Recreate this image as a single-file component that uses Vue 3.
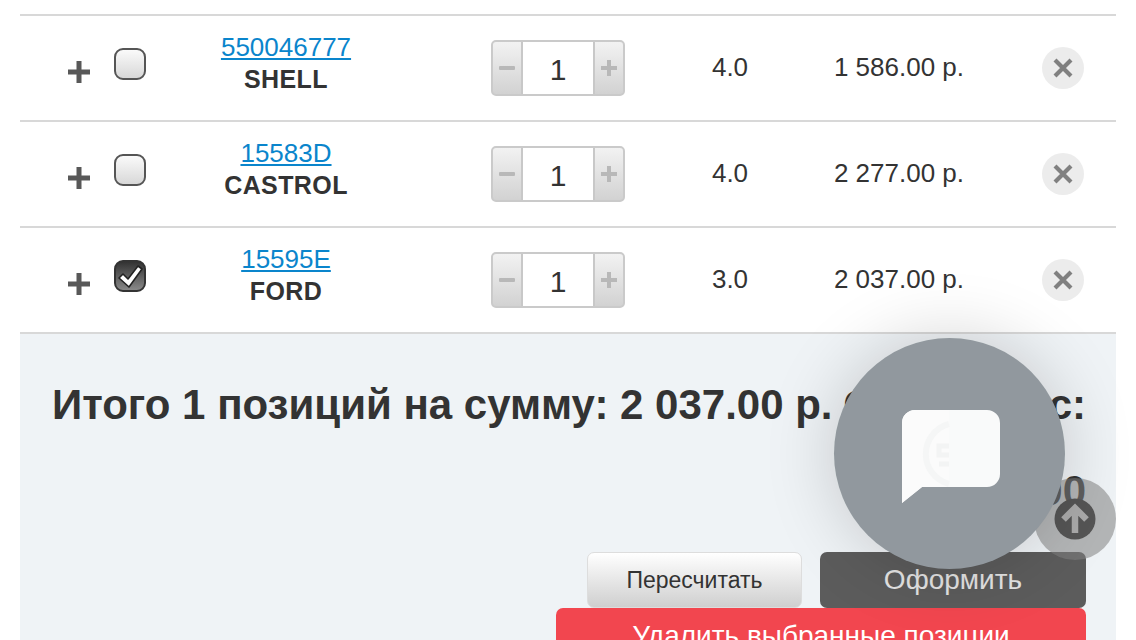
<template>
  <div class="page">
    <div class="rows">
      <div v-for="item in items" :key="item.code" class="row">
        <div class="pick">
          <svg class="plus" width="22" height="22" viewBox="0 0 22 22">
            <path d="M8.500 0h5v8.500H22v5h-8.500V22h-5v-8.500H0v-5h8.500z" fill="#585858" />
          </svg>
          <span :class="['check', { checked: item.checked }]">
            <svg v-if="item.checked" width="32" height="32" viewBox="0 0 32 32">
              <path d="M5 18l4-4 5 5L24 6l4 3-13 18z" fill="#fff" stroke="#222" stroke-width="1.6" stroke-linejoin="round" />
            </svg>
          </span>
        </div>
        <div class="name">
          <a href="#">{{ item.code }}</a>
          <b>{{ item.brand }}</b>
        </div>
        <div class="qty-cell">
          <div class="stepper">
            <span class="step">
              <svg width="16" height="16" viewBox="0 0 16 16"><rect y="6" width="16" height="4" rx="1" fill="#b8b8b8" /></svg>
            </span>
            <span class="value">1</span>
            <span class="step">
              <svg width="16" height="16" viewBox="0 0 16 16"><path d="M6 0h4v6h6v4h-6v6H6v-6H0V6h6z" fill="#b8b8b8" /></svg>
            </span>
          </div>
        </div>
        <div class="num vol">{{ item.volume }}</div>
        <div class="num price">{{ item.price }}</div>
        <div class="remove-cell">
          <span class="remove">
            <svg width="20" height="20" viewBox="0 0 20 20">
              <path d="M2 2l16 16M18 2L2 18" stroke="#808080" stroke-width="4.200" />
            </svg>
          </span>
        </div>
      </div>
    </div>

    <div class="summary">
      <div class="total">
        <span>Итого 1 позиций на сумму: 2 037.00 р.</span>
        <span>Общий вес:</span>
      </div>
      <div class="bonus">0.00</div>
      <div class="actions">
        <button class="btn light">Пересчитать</button>
        <button class="btn dark">Оформить</button>
        <button class="btn red">Удалить выбранные позиции</button>
      </div>
    </div>

    <div class="to-top">
      <svg width="42" height="42" viewBox="0 0 42 42">
        <circle cx="21" cy="21" r="20.500" fill="#555" />
        <path d="M21 35V10M9.500 21.500L21 10l11.500 11.500" fill="none" stroke="#aaa" stroke-width="6.500" />
      </svg>
    </div>

    <div class="chat">
      <svg width="98" height="94" viewBox="0 0 98 94">
        <path d="M13 0h72a13 13 0 0 1 13 13v51a13 13 0 0 1-13 13H20L0 93V13A13 13 0 0 1 13 0z" fill="#f9fafa" />
        <path d="M47 0H13A13 13 0 0 0 0 13v80l20-16h27z" fill="#fbfbfb" />
        <path d="M47 14a31 31 0 0 0 0 60" fill="none" stroke="#f5f6f6" stroke-width="6" />
        <path d="M47 36H37v9h10M37 54h10" fill="none" stroke="#f3f4f4" stroke-width="5" />
      </svg>
    </div>
  </div>
</template>

<script setup>
const items = [
  { code: "550046777", brand: "SHELL", volume: "4.0", price: "1 586.00 р.", checked: false },
  { code: "15583D", brand: "CASTROL", volume: "4.0", price: "2 277.00 р.", checked: false },
  { code: "15595E", brand: "FORD", volume: "3.0", price: "2 037.00 р.", checked: true },
];
</script>

<style>
html,
body {
  margin: 0;
  height: 640px;
  overflow: hidden;
  background: #fff;
}
</style>

<style scoped>
.page {
  position: relative;
  height: 640px;
  overflow: hidden;
  box-sizing: border-box;
  padding: 14px 20px 0;
  font-family: "Liberation Sans", Arial, sans-serif;
  color: #333;
}

.row {
  display: grid;
  grid-template-columns: 120px 292px 252px 92px 246px 82px;
  height: 106px;
  box-sizing: border-box;
  border-top: 2px solid #d8d8d8;
  align-items: center;
}

.pick {
  display: flex;
  align-items: center;
  padding-left: 48px;
  gap: 24px;
}

.plus {
  margin-top: 7px;
  flex: none;
}

.check {
  flex: none;
  width: 32px;
  height: 32px;
  box-sizing: border-box;
  margin-bottom: 8px;
  border: 2px solid #555;
  border-radius: 9px;
  background: linear-gradient(#fafafa, #d8d8d8);
}

.check.checked {
  border-color: #333;
  background: linear-gradient(#333, #888);
}

.check svg {
  display: block;
  margin: -2px;
}

.name {
  display: flex;
  flex-direction: column;
  align-items: center;
  font-size: 26px;
  line-height: 32px;
  margin-top: -11px;
}

.name a {
  color: #0a85cc;
  text-decoration: underline;
}

.name b {
  font-size: 25px;
  letter-spacing: 0.4px;
}

.qty-cell {
  display: flex;
  justify-content: center;
}

.stepper {
  display: flex;
  width: 134px;
  height: 56px;
  box-sizing: border-box;
  border: 2px solid #cacaca;
  border-radius: 5px;
  background: linear-gradient(#f2f2f2, #d2d2d2);
}

.step {
  flex: 1;
  display: flex;
  align-items: center;
  justify-content: center;
}

.value {
  width: 70px;
  border-left: 2px solid #c8c8c8;
  border-right: 2px solid #c8c8c8;
  background: #fff;
  text-align: center;
  font-size: 30px;
  line-height: 56px;
}

.num {
  font-size: 26px;
  text-align: center;
  margin-top: -2px;
}

.remove-cell {
  display: flex;
  justify-content: center;
}

.remove {
  display: flex;
  align-items: center;
  justify-content: center;
  width: 42px;
  height: 42px;
  border-radius: 50%;
  background: #ececec;
}

.summary {
  border-top: 2px solid #d8d8d8;
  background: #eff3f6;
  padding: 48px 30px 0 32px;
}

.total {
  display: flex;
  justify-content: space-between;
  font-size: 42px;
  font-weight: bold;
  line-height: 46px;
  white-space: nowrap;
}

.bonus {
  margin-top: 40px;
  text-align: right;
  font-size: 42px;
  font-weight: bold;
  line-height: 46px;
}

.actions {
  display: flex;
  flex-wrap: wrap;
  justify-content: flex-end;
  column-gap: 18px;
  margin-top: 38px;
}

.btn {
  box-sizing: border-box;
  height: 56px;
  border: 0;
  border-radius: 7px;
  font-family: inherit;
  font-size: 28px;
  padding: 0;
  white-space: nowrap;
}

.light {
  width: 215px;
  border: 1px solid #ddd;
  background: linear-gradient(#fff, #cfcfcf);
  color: #333;
  font-size: 23px;
}

.dark {
  width: 266px;
  background: #5c5c5c;
  color: #e4e4e4;
}

.red {
  width: 530px;
  background: #f2464f;
  color: #fff;
}

.to-top {
  position: absolute;
  left: 1034px;
  top: 478px;
  width: 82px;
  height: 82px;
  display: flex;
  align-items: center;
  justify-content: center;
  border-radius: 50%;
  background: rgba(130, 130, 130, 0.55);
}

.chat {
  position: absolute;
  left: 834px;
  top: 338px;
  width: 231px;
  height: 231px;
  display: flex;
  align-items: center;
  justify-content: center;
  border-radius: 50%;
  background: #91989e;
  box-shadow: 0 0 70px rgba(0, 0, 0, 0.18);
}

.chat svg {
  margin: 7px 0 0 2px;
}
</style>
